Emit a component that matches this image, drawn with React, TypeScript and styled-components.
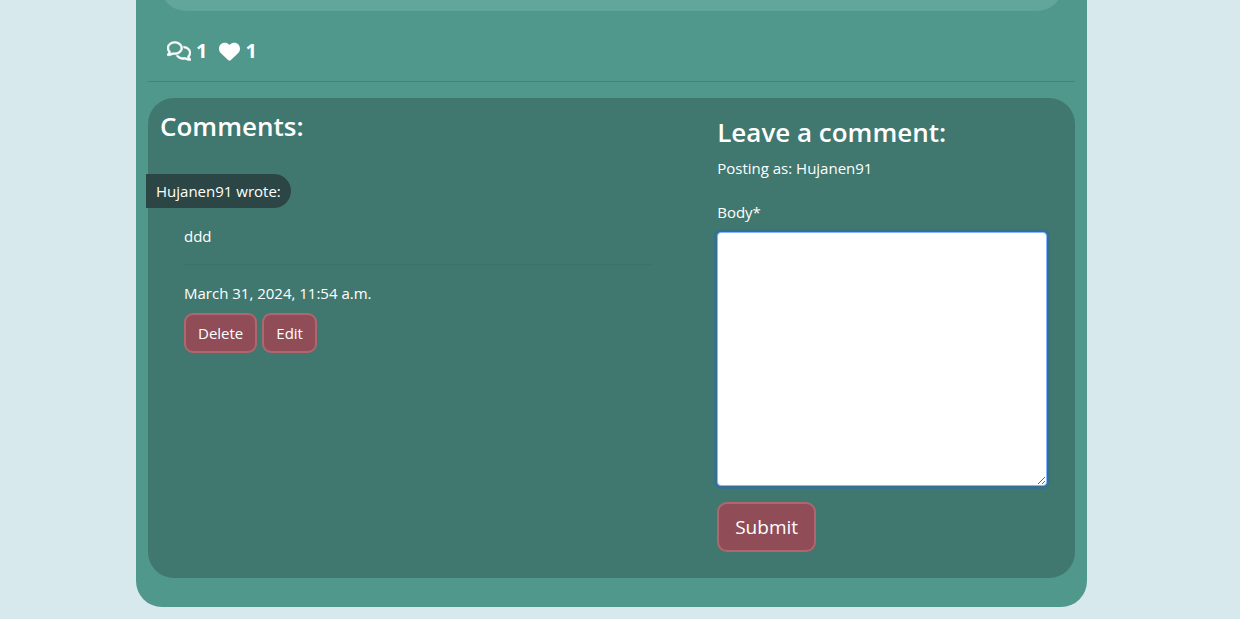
import React from "react";
import styled, { createGlobalStyle } from "styled-components";
import { FaHeart, FaRegComments } from "react-icons/fa6";

const GlobalStyle = createGlobalStyle`
  *, *::before, *::after { box-sizing: border-box; }
  body {
    margin: 0;
    background: #d8e9ed;
    color: #fff;
    font-family: "Segoe UI", "Open Sans", "Noto Sans", sans-serif;
    font-size: 15px;
    line-height: 24px;
  }
`;

const Page = styled.div`
  padding: 0 153px 12px 136px;
`;

const Card = styled.main`
  padding: 0 12px 29px;
  overflow: hidden;
  border-radius: 0 0 26px 26px;
  background: #50978c;
`;

const PostBody = styled.div`
  height: 60px;
  margin: -49px 12px 0;
  border-radius: 26px;
  background: #62a59b;
`;

const Stats = styled.div`
  display: flex;
  align-items: center;
  gap: 12px;
  height: 24px;
  margin: 28px 0 18px;
  padding-left: 19px;
`;

const Stat = styled.span`
  display: flex;
  align-items: center;
  gap: 5px;
  font-size: 20px;
  font-weight: 700;
`;

const CommentsIcon = styled(FaRegComments)`
  stroke: currentColor;
  stroke-width: 14px;
`;

const Rule = styled.hr<{ $color: string; $space: number }>`
  height: 1px;
  margin: 0 0 ${(p) => p.$space}px;
  border: 0;
  background: ${(p) => p.$color};
`;

const Panel = styled.section`
  display: grid;
  grid-template-columns: 3fr 2fr;
  border-radius: 26px;
  background: #407870;
`;

const CommentsColumn = styled.div`
  padding: 12px 0 0;
`;

const FormColumn = styled.div`
  padding: 18px 28px 26px 13px;
`;

const Heading = styled.h3<{ $inset?: boolean }>`
  margin: 0 0 8px;
  padding-left: ${(p) => (p.$inset ? 12 : 0)}px;
  font-size: 26px;
  font-weight: 600;
  line-height: 32px;
`;

const Author = styled.div`
  width: fit-content;
  margin: 32px 0 0 -2px;
  padding: 5px 10px;
  border-radius: 0 17px 17px 0;
  background: #2c4645;
`;

const Comment = styled.article`
  padding: 16px 52px 0 36px;
`;

const Text = styled.p<{ $space: number }>`
  margin: 0 0 ${(p) => p.$space}px;
`;

const Actions = styled.div`
  display: flex;
  gap: 5px;
`;

const Button = styled.button<{ $large?: boolean }>`
  padding: ${(p) => (p.$large ? "8px 16px" : "6px 12px")};
  border: 2px solid #b0656f;
  border-radius: ${(p) => (p.$large ? 10 : 9)}px;
  background: #904d58;
  color: #fff;
  font: inherit;
  font-size: ${(p) => (p.$large ? 19 : 15)}px;
  line-height: ${(p) => (p.$large ? 30 : 24)}px;
`;

const Label = styled.label`
  display: block;
  margin-bottom: 8px;
`;

const TextArea = styled.textarea`
  display: block;
  width: 100%;
  height: 254px;
  margin-bottom: 16px;
  padding: 6px 12px;
  border: 1px solid #86b7fe;
  border-radius: 4px;
  outline: 0;
  box-shadow: 0 0 0 3px #35718f;
  background: #fff;
  color: #212529;
  font: inherit;
  resize: vertical;
`;

export default function App() {
  return (
    <Page>
      <GlobalStyle />
      <Card>
        <PostBody />
        <Stats>
          <Stat><CommentsIcon size={24} aria-label="Comments" />1</Stat>
          <Stat><FaHeart size={21} aria-label="Likes" />1</Stat>
        </Stats>
        <Rule $color="#468279" $space={16} />
        <Panel>
          <CommentsColumn>
            <Heading $inset>Comments:</Heading>
            <Author>Hujanen91 wrote:</Author>
            <Comment>
              <Text $space={16}>ddd</Text>
              <Rule $color="#3d716a" $space={16} />
              <Text $space={8}>March 31, 2024, 11:54 a.m.</Text>
              <Actions>
                <Button type="button">Delete</Button>
                <Button type="button">Edit</Button>
              </Actions>
            </Comment>
          </CommentsColumn>
          <FormColumn>
            <Heading>Leave a comment:</Heading>
            <form onSubmit={(e) => e.preventDefault()}>
              <Text $space={20}>Posting as: Hujanen91</Text>
              <Label htmlFor="body">Body*</Label>
              <TextArea id="body" name="body" required />
              <Button type="submit" $large>Submit</Button>
            </form>
          </FormColumn>
        </Panel>
      </Card>
    </Page>
  );
}
